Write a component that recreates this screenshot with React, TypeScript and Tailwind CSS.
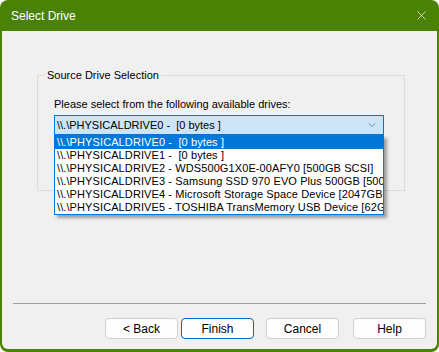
import { X, ChevronDown } from "lucide-react";

const drives = [
  "\\\\.\\PHYSICALDRIVE0 -  [0 bytes ]",
  "\\\\.\\PHYSICALDRIVE1 -  [0 bytes ]",
  "\\\\.\\PHYSICALDRIVE2 - WDS500G1X0E-00AFY0 [500GB SCSI]",
  "\\\\.\\PHYSICALDRIVE3 - Samsung SSD 970 EVO Plus 500GB [500GB NVMe]",
  "\\\\.\\PHYSICALDRIVE4 - Microsoft Storage Space Device [2047GB Spaces]",
  "\\\\.\\PHYSICALDRIVE5 - TOSHIBA TransMemory USB Device [62GB USB]",
];

const buttons = [
  { label: "< Back", cls: "ml-auto border border-[#d0d0d0]" },
  { label: "Finish", cls: "ml-[3px] border-[1.5px] border-[#0067c0]" },
  { label: "Cancel", cls: "ml-[12px] border border-[#d0d0d0]" },
  { label: "Help", cls: "ml-[14px] border border-[#d0d0d0]" },
];

const App = () => {
  return (
    <div
      className="w-[439px] h-[352px] bg-white"
      style={{ fontFamily: '"Liberation Sans", Arial, sans-serif' }}
    >
      <div className="w-full h-full bg-[#4a8205] rounded-[8px] flex flex-col overflow-hidden">
        <div className="h-[31px] flex items-center pl-[11px] pr-[10px] text-white text-[12px] shrink-0">
          <span>Select Drive</span>
          <X size={15} strokeWidth={1.1} className="ml-auto" />
        </div>
        <div className="flex-1 mx-[2px] mb-[3px] bg-[#f0f0f0] rounded-b-[6px] flex flex-col text-[11px] text-black">
          <fieldset className="relative mt-[37px] ml-[35px] mr-[32px] border border-[#dcdcdc] pl-[7px] pr-[20px] pb-[55px]">
            <legend className="px-[2px] leading-[14px]">Source Drive Selection</legend>
            <div className="pl-[9px]">
              <p className="mt-[15px] leading-[14px]">
                Please select from the following available drives:
              </p>
              <div className="relative mt-[4px]">
                <div className="h-[20px] border border-[#0078d7] bg-[#cce4f7] flex items-center pl-[2px] pr-[5px]">
                  <span className="whitespace-pre leading-[13px]">{drives[0]}</span>
                  <ChevronDown size={12} strokeWidth={1.2} className="ml-auto text-[#505050]" />
                </div>
                <div className="absolute left-0 right-0 top-[20px] bg-white border border-[#0078d7] shadow-[3px_3px_3px_rgba(0,0,0,0.35)] overflow-hidden z-10">
                  {drives.map((d, i) => (
                    <div
                      key={d}
                      className={
                        "h-[13px] leading-[13px] pl-[2px] whitespace-pre overflow-hidden tracking-[0.1px] " +
                        (i === 0 ? "bg-[#0078d7] text-white" : "")
                      }
                    >
                      {d}
                    </div>
                  ))}
                </div>
              </div>
            </div>
          </fieldset>

          <div className="mt-auto mx-[11px] border-t border-[#a0a0a0]" />
          <div className="flex items-center mt-[14px] mb-[10px] pr-[11px] text-[12px]">
            {buttons.map((b) => (
              <button
                key={b.label}
                className={
                  "w-[73px] h-[21px] bg-[#fdfdfd] rounded-[4px] flex items-center justify-center " +
                  b.cls
                }
              >
                {b.label}
              </button>
            ))}
          </div>
        </div>
      </div>
    </div>
  );
};

export default App;
